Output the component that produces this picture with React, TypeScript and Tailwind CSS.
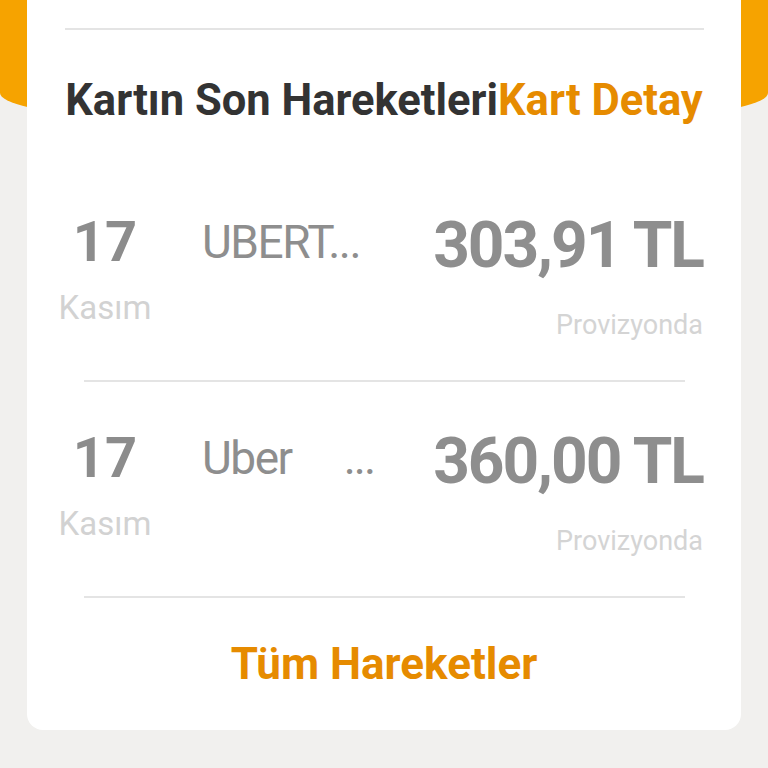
import React from "react";

const font = { fontFamily: "Roboto, 'Noto Sans', sans-serif" };

function Row({ name, dots, amount }: { name: string; dots?: boolean; amount: string }) {
  return (
    <div className="flex items-start pl-[28px] pr-[38px] h-[214px]">
      <div className="w-[100px] flex flex-col items-center">
        <div className="text-[56px] leading-[56px] font-bold text-[#8c8c8c] mt-[48px]">17</div>
        <div className="text-[33px] leading-[33px] text-[#d2d2d2] mt-[21px]">Kasım</div>
      </div>
      <div className="ml-[47px] flex items-center text-[46px] leading-[46px] text-[#8e8e8e] mt-[53px] tracking-[-1.5px]">
        <span>{name}</span>
        {dots && <span className="ml-[52px] tracking-[-2px]">...</span>}
      </div>
      <div className="ml-auto flex flex-col items-end">
        <div className="text-[64px] leading-[64px] font-bold text-[#8e8e8e] mt-[48px] tracking-[-2px]">{amount}</div>
        <div className="text-[27px] leading-[27px] text-[#d4d4d4] mt-[34px]">Provizyonda</div>
      </div>
    </div>
  );
}

export default function App() {
  return (
    <div className="relative w-[768px] h-[768px] overflow-hidden bg-[#f1f0ee]" style={font}>
      <div className="absolute top-0 left-0 w-[768px] h-[131px] bg-[#f6a300] rounded-bl-[384px_38px] rounded-br-[384px_38px]" />
      <div className="relative mx-[27px] h-[730px] bg-white rounded-b-[16px] flex flex-col">
        <div className="mt-[28px] ml-[38px] mr-[37px] h-[2px] bg-[#e4e4e4]" />
        <div className="mt-[49px] flex justify-center text-[43.5px] leading-[44px] font-bold">
          <span className="text-[#333333]">Kartın Son Hareketleri</span>
          <span className="text-[#e68b00]">Kart Detay</span>
        </div>
        <div className="mt-[43px]">
          <Row name="UBERT..." amount="303,91 TL" />
        </div>
        <div className="ml-[57px] mr-[56px] h-[2px] bg-[#e4e4e4]" />
        <Row name="Uber" dots amount="360,00 TL" />
        <div className="ml-[57px] mr-[56px] h-[2px] bg-[#e4e4e4]" />
        <div className="mt-[44px] flex justify-center text-[44px] leading-[44px] font-bold text-[#e68b00]">
          Tüm Hareketler
        </div>
      </div>
    </div>
  );
}
